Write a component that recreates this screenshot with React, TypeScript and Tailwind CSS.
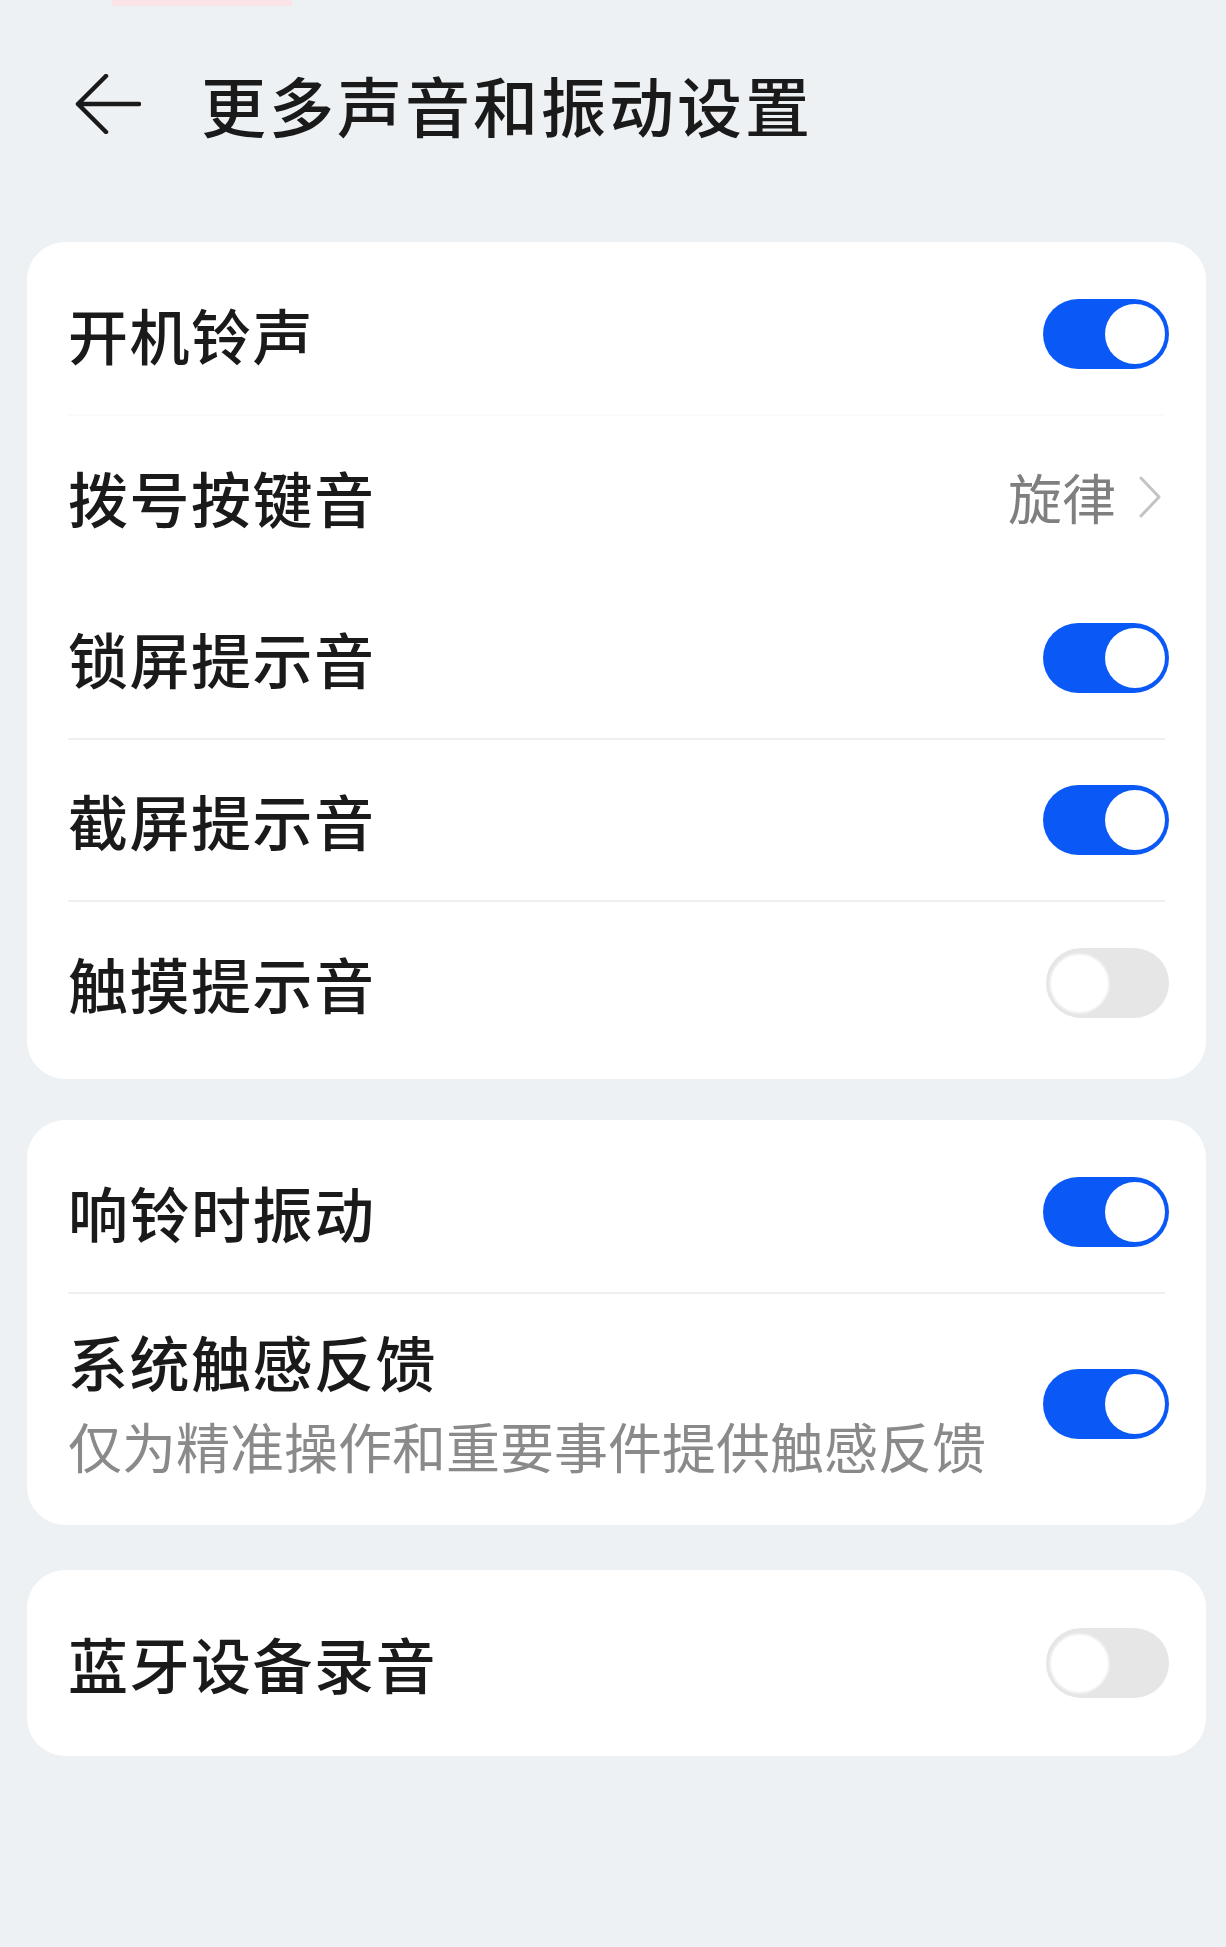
const font = { fontFamily: '"Noto Sans CJK SC", "Noto Sans", sans-serif' };

function Toggle({ on }: { on: boolean }) {
  if (on) {
    return (
      <div className="flex h-[70px] w-[126px] shrink-0 items-center justify-end rounded-full bg-[#0a59f7] pr-[4px]">
        <div className="h-[60px] w-[60px] rounded-full bg-white" />
      </div>
    );
  }
  return (
    <div className="flex h-[70px] w-[123px] shrink-0 items-center justify-start rounded-full bg-[#e6e6e6] pl-[3px]">
      <div className="h-[61px] w-[61px] rounded-full border-[2px] border-[#f1f1f1] bg-white" />
    </div>
  );
}

function Row({
  title,
  on,
  value,
  divider,
}: {
  title: string;
  on?: boolean;
  value?: string;
  divider?: "solid" | "faint";
}) {
  return (
    <div>
      <div
        className={
          (divider ? "h-[160px] " : "h-[162px] ") +
          (value ? "pr-[44px] " : "pr-[37px] ") +
          "flex items-center justify-between pl-[41px]"
        }
      >
        <span className="text-[60px] font-medium leading-none tracking-[1.5px] text-[#1a1a1a]">{title}</span>
        {value ? (
          <div className="flex items-center gap-[22px]">
            <span className="text-[54px] leading-none text-[#7f7f7f]">{value}</span>
            <svg width="24" height="42" viewBox="0 0 24 42" fill="none">
              <path d="M3 2 L21 21 L3 40" stroke="#c4c4c4" strokeWidth="3" strokeLinecap="round" strokeLinejoin="round" />
            </svg>
          </div>
        ) : (
          <Toggle on={!!on} />
        )}
      </div>
      {divider === "solid" && <div className="mx-[41px] h-[2px] bg-[#eeeff0]" />}
      {divider === "faint" && <div className="mx-[41px] h-[2px] bg-[#fafafa]" />}
    </div>
  );
}

export default function App() {
  return (
    <div className="min-h-[1947px] w-full bg-[#eef1f3]" style={font}>
      <div className="ml-[112px] h-[6px] w-[180px] bg-[#fbe4e7]" />

      <div className="flex h-[196px] items-center pl-[75px]">
        <svg width="66" height="60" viewBox="0 0 66 60" fill="none">
          <path d="M31 2 L3 30 L31 58 M3 30 L64 30" stroke="#1a1a1a" strokeWidth="4.5" strokeLinecap="round" strokeLinejoin="round" />
        </svg>
        <h1 className="ml-[60px] text-[65px] font-medium leading-none tracking-[3px] text-[#1a1a1a]">更多声音和振动设置</h1>
      </div>

      <div className="mt-[40px] ml-[27px] mr-[20px] flex flex-col">
        <div className="rounded-[38px] bg-white pt-[12px] pb-[15px]">
          <Row title="开机铃声" on divider="faint" />
          <Row title="拨号按键音" value="旋律" />
          <Row title="锁屏提示音" on divider="solid" />
          <Row title="截屏提示音" on divider="solid" />
          <Row title="触摸提示音" on={false} />
        </div>

        <div className="mt-[41px] rounded-[38px] bg-white py-[12px]">
          <Row title="响铃时振动" on divider="solid" />
          <div className="flex h-[219px] items-center justify-between pl-[41px] pr-[37px]">
            <div className="flex flex-col gap-[28px] pb-[4px]">
              <span className="text-[60px] font-medium leading-none tracking-[1.5px] text-[#1a1a1a]">系统触感反馈</span>
              <span className="text-[54px] leading-none text-[#8a8a8a]">仅为精准操作和重要事件提供触感反馈</span>
            </div>
            <Toggle on />
          </div>
        </div>

        <div className="mt-[45px] rounded-[38px] bg-white py-[12px]">
          <Row title="蓝牙设备录音" on={false} />
        </div>
      </div>
    </div>
  );
}
